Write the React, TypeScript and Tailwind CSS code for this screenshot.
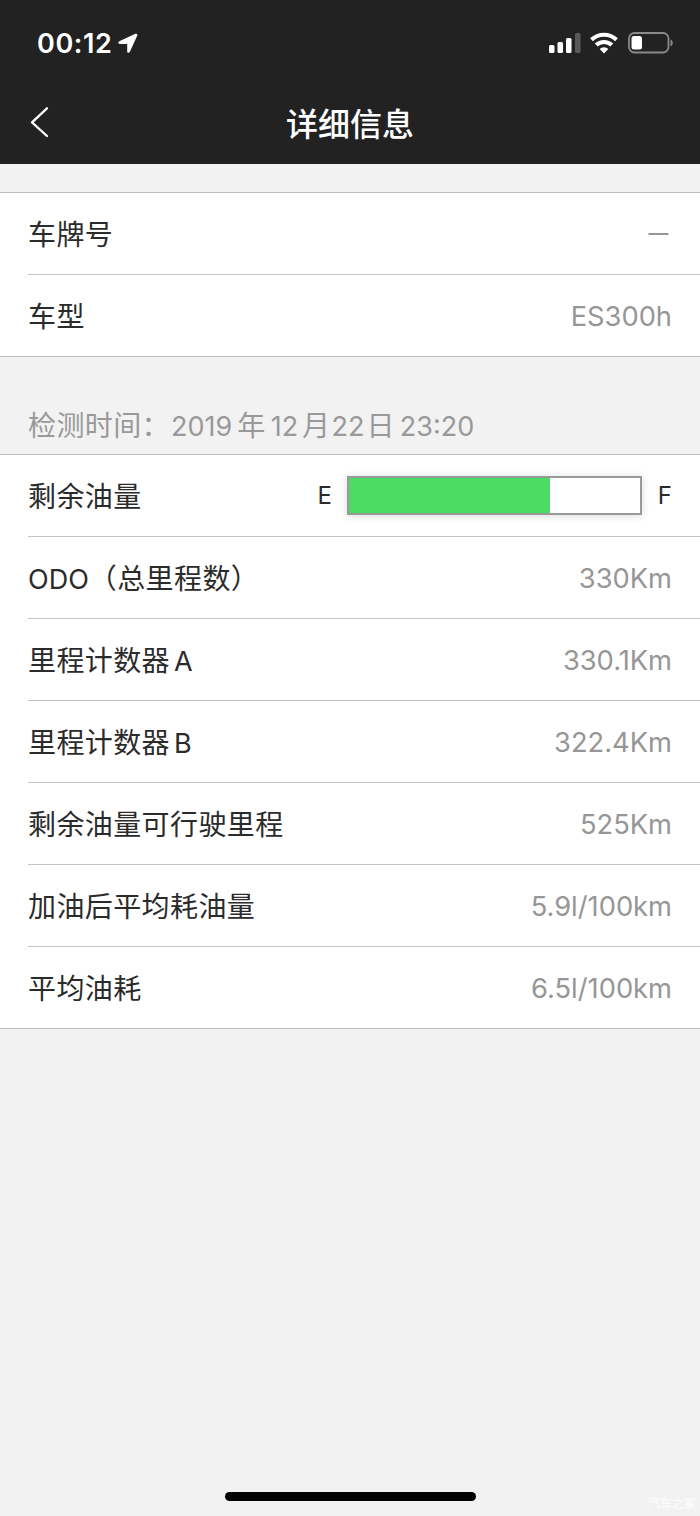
import type { ReactNode } from 'react'

const fuelLevel = 69

const vehicle = [
  { label: '车牌号', value: '－' },
  { label: '车型', value: 'ES300h' },
]

const readings = [
  { label: <><Latin>ODO</Latin>（总里程数）</>, value: '330Km' },
  { label: <>里程计数器<Latin className="ml-1">A</Latin></>, value: '330.1Km' },
  { label: <>里程计数器<Latin className="ml-1">B</Latin></>, value: '322.4Km' },
  { label: '剩余油量可行驶里程', value: '525Km' },
  { label: '加油后平均耗油量', value: '5.9l/100km' },
  { label: '平均油耗', value: '6.5l/100km' },
]

function Latin({ className = '', children }: { className?: string; children: ReactNode }) {
  return <span className={`text-[27px] leading-none tracking-normal ${className}`}>{children}</span>
}

function StatusBar() {
  return (
    <div className="flex h-[82px] items-center justify-between pt-1 pl-[37px] pr-[27px] text-white">
      <div className="flex items-center gap-1.5">
        <span className="text-[27px] font-semibold leading-none tracking-[0.6px]">00:12</span>
        <svg width="20" height="20" viewBox="0 0 20 20" fill="currentColor">
          <path d="M17.300.8 1.300 8.200C-.2 8.900.1 10.900 1.700 10.900h7.100c.3 0 .4.100.4.400v7.100c0 1.500 2 1.800 2.700.4l7.400-16.200c.6-1.300-.7-2.400-2-1.800Z" />
        </svg>
      </div>
      <div className="flex items-center gap-[9px]">
        <svg width="33" height="22" viewBox="0 0 33 22" fill="currentColor">
          <rect x="1" y="13" width="5.500" height="8" rx="1.500" />
          <rect x="9.500" y="10" width="5.500" height="11" rx="1.500" />
          <rect x="18" y="6" width="5.500" height="15" rx="1.500" />
          <rect x="27" y="1" width="5.500" height="20" rx="1.500" opacity=".25" />
        </svg>
        <svg width="28" height="22" viewBox="0 0 28 22" fill="none" stroke="currentColor" strokeWidth="4.200">
          <path d="M1.500 7.800a18 18 0 0 1 25 0" />
          <path d="M6.200 13.100a11.300 11.300 0 0 1 15.600 0" />
          <path d="M14 21.500 9.700 17a6 6 0 0 1 8.600 0Z" fill="currentColor" stroke="none" />
        </svg>
        <svg width="46" height="22" viewBox="0 0 46 22" fill="none">
          <rect x="2" y="1" width="39.500" height="19.500" rx="5.500" stroke="#8a8a8a" strokeWidth="1.800" />
          <rect x="4.500" y="4" width="10.500" height="13.500" rx="2.500" fill="#fff" />
          <path d="M43.500 7.500c3 1.200 3 5.600 0 6.800Z" fill="#8a8a8a" />
        </svg>
      </div>
    </div>
  )
}

function Header() {
  return (
    <div className="grid h-[82px] grid-cols-[1fr_auto_1fr] items-center px-[29px] text-white">
      <button aria-label="返回" className="w-5 pb-0.5">
        <svg width="20" height="32" viewBox="0 0 20 32" fill="none" stroke="currentColor" strokeWidth="2.300" strokeLinecap="round" strokeLinejoin="round">
          <path d="M18 2.300 3 16.300 18 30" />
        </svg>
      </button>
      <h1 className="pt-[3px] text-[32px] font-medium leading-none">详细信息</h1>
    </div>
  )
}

function Row({ label, children }: { label: ReactNode; children: ReactNode }) {
  return (
    <div className="ml-7 flex h-[82px] items-center justify-between border-b border-[#c4c4c6] pt-0.5 pr-7 last:border-b-0 last:h-[81px]">
      <span className="text-[28px] leading-[42px] tracking-[0.4px] text-[#2b2b2b]">{label}</span>
      {children}
    </div>
  )
}

function Value({ children }: { children: ReactNode }) {
  return <span className="pt-0.5 text-[27.3px] text-[#969696]">{children}</span>
}

function FuelGauge() {
  return (
    <div className="flex items-center pb-0.5 text-2xl text-[#2b2b2b]">
      <span>E</span>
      <div className="mr-4 ml-[15px] h-[39px] w-[295px] border-2 border-[#999] bg-white shadow-[0_1px_8px_rgba(0,0,0,0.15)]">
        <div className="h-full bg-[#4cdb64]" style={{ width: `${fuelLevel}%` }} />
      </div>
      <span>F</span>
    </div>
  )
}

export default function App() {
  return (
    <div className="relative flex h-[1516px] w-[700px] flex-col overflow-hidden bg-[#f2f2f2] font-['Inter','Noto_Sans_CJK_SC',sans-serif]">
      <div className="h-[164px] bg-[#222]">
        <StatusBar />
        <Header />
      </div>

      <section className="mt-7 border-y border-[#bcbcbe] bg-white">
        {vehicle.map((item) => (
          <Row key={item.value} label={item.label}>
            <Value>{item.value}</Value>
          </Row>
        ))}
      </section>

      <div className="flex h-[97px] items-baseline px-7 pt-[49px] text-[28px] leading-10 tracking-[0.4px] text-[#999]">
        检测时间：
        <Latin className="ml-px mr-[5px]">2019</Latin>年
        <Latin className="ml-[5px] mr-1">12</Latin>月
        <Latin className="ml-px mr-0.5">22</Latin>日
        <Latin className="ml-[5px]">23:20</Latin>
      </div>

      <section className="border-y border-[#bcbcbe] bg-white">
        <Row label="剩余油量">
          <FuelGauge />
        </Row>
        {readings.map((item) => (
          <Row key={item.value} label={item.label}>
            <Value>{item.value}</Value>
          </Row>
        ))}
      </section>

      {/* Home indicator */}
      <div className="mx-auto mt-auto mb-[15px] h-[9px] w-[251px] rounded-full bg-black" />
      <span className="absolute right-1 bottom-1 text-xs leading-4 text-white/80">汽车之家</span>
    </div>
  )
}
